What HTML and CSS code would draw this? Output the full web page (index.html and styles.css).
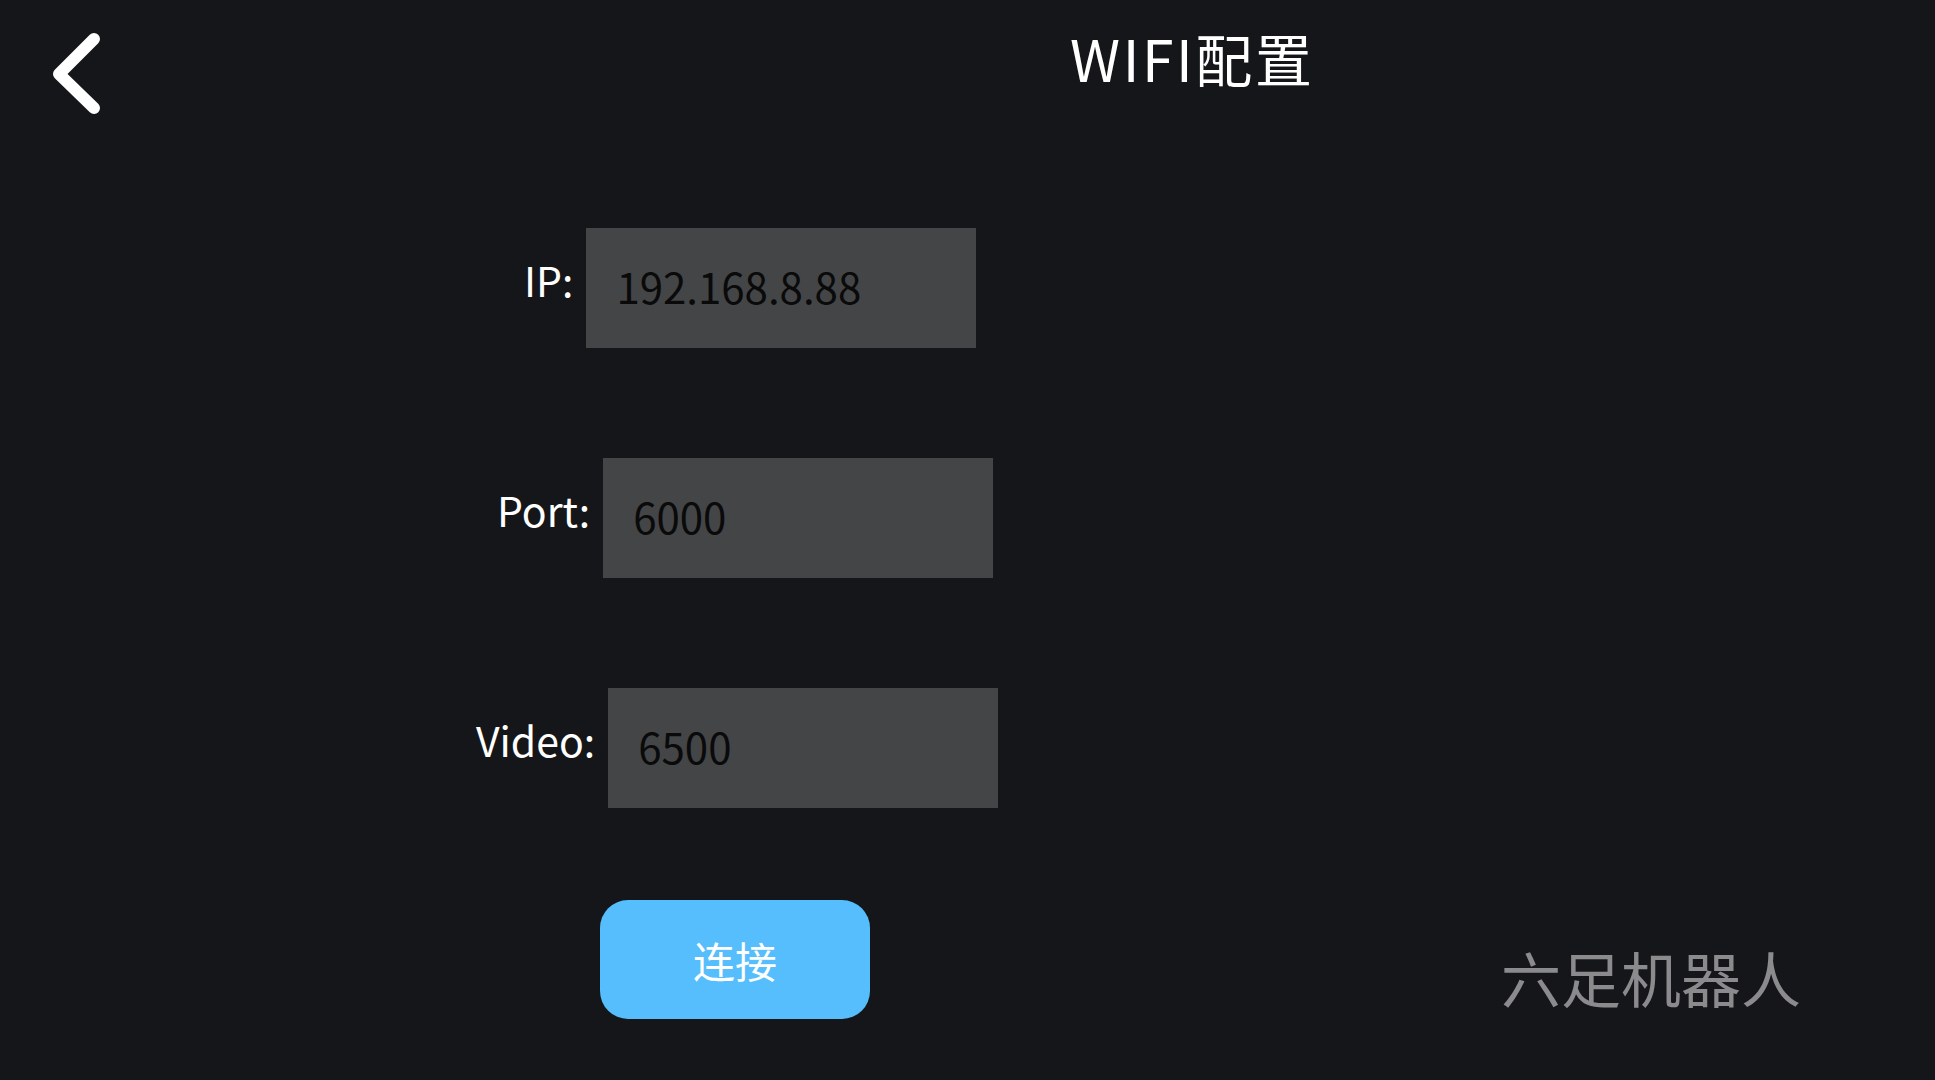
FILE: index.html
```html
<!DOCTYPE html>
<html lang="zh">
<head>
<meta charset="utf-8">
<title>WIFI配置</title>
<link rel="stylesheet" href="styles.css">
</head>
<body>
<div class="page">
  <header class="header">
    <div class="back">
      <svg width="60" height="100" viewBox="0 0 60 100">
        <polyline points="48,15 13,50 48,84" fill="none" stroke="#ffffff" stroke-width="12" stroke-linecap="round" stroke-linejoin="round"/>
      </svg>
    </div>
    <h1 class="title">WIFI配置</h1>
  </header>
  <main class="form">
    <div class="row row-ip">
      <span class="label">IP:</span>
      <div class="field">192.168.8.88</div>
    </div>
    <div class="row row-port">
      <span class="label">Port:</span>
      <div class="field">6000</div>
    </div>
    <div class="row row-video">
      <span class="label">Video:</span>
      <div class="field">6500</div>
    </div>
  </main>
  <footer class="footer">
    <button class="connect">连接</button>
    <div class="brand">六足机器人</div>
  </footer>
</div>
</body>
</html>
```
FILE: styles.css
```css
html, body {
  margin: 0;
  padding: 0;
  background: #151619;
}
body {
  font-family: "Noto Sans CJK SC", "Noto Sans", sans-serif;
  color: #ffffff;
}
.page {
  width: 1935px;
  height: 1080px;
  overflow: hidden;
  display: flex;
  flex-direction: column;
}
.header {
  display: flex;
  align-items: flex-start;
  height: 228px;
}
.back {
  margin: 24px 0 0 46px;
  width: 60px;
  height: 100px;
}
.back svg {
  display: block;
}
.title {
  margin: 29px 0 0 964px;
  font-size: 57px;
  font-weight: 400;
  line-height: 1;
  letter-spacing: 2.6px;
}
.form {
  display: flex;
  flex-direction: column;
  gap: 110px;
}
.row {
  display: flex;
  align-items: center;
  gap: 13px;
  height: 120px;
}
.row-ip { margin-left: 524px; }
.row-port { margin-left: 497px; }
.row-video { margin-left: 476px; }
.label {
  font-size: 41px;
  line-height: 1;
  margin-bottom: 18px;
}
.field {
  box-sizing: border-box;
  width: 390px;
  height: 120px;
  background: #444547;
  color: #0a0a0a;
  font-size: 42px;
  line-height: 116px;
  padding-left: 30px;
}
.footer {
  display: flex;
  align-items: flex-end;
  margin-top: 92px;
}
.connect {
  margin-left: 600px;
  width: 270px;
  height: 119px;
  border: none;
  border-radius: 28px;
  background: #56befc;
  color: #ffffff;
  font-family: "Noto Sans CJK SC", sans-serif;
  font-size: 42px;
  line-height: 1;
  padding: 0;
}
.brand {
  margin-left: auto;
  margin-right: 134px;
  margin-bottom: 12px;
  font-size: 60px;
  line-height: 1;
  color: #8b8b8d;
}
```
